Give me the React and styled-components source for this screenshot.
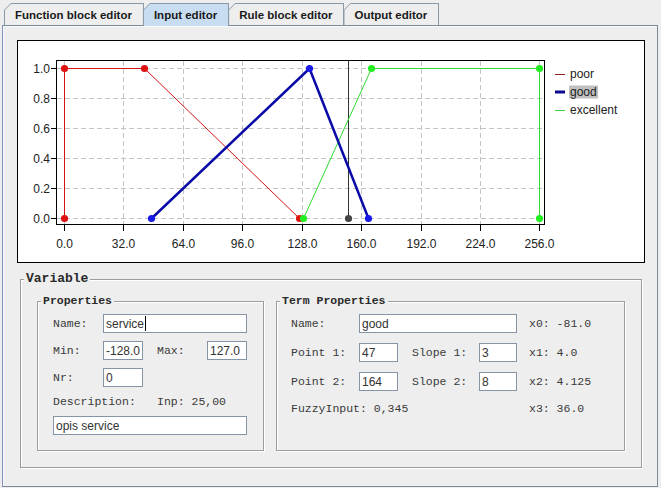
import React from 'react';
import styled, { createGlobalStyle } from 'styled-components';

const GlobalStyle = createGlobalStyle`
  html, body { margin: 0; padding: 0; background: #eeeeee; }
  body { font-family: "Liberation Sans", Arial, sans-serif; }
`;

const Window = styled.div`
  width: 661px;
  height: 488px;
  display: flex;
  flex-direction: column;
  background: #eeeeee;
  overflow: hidden;
`;

const TabStrip = styled.div`
  display: flex;
  height: 22px;
  margin-top: 3px;
  padding-left: 4px;
  position: relative;
  z-index: 1;
`;

const Tab = styled.div`
  box-sizing: border-box;
  height: ${p => (p.$active ? 23 : 22)}px;
  margin-left: ${p => (p.$first ? 0 : -1)}px;
  padding: 1px 1px 0 1px;
  background: #8b9aa8;
  clip-path: polygon(0 7px, 7px 0, 100% 0, 100% 100%, 0 100%);
`;

const TabFace = styled.div`
  height: 100%;
  display: flex;
  align-items: center;
  padding: 0 11px 0 10px;
  background: ${p => (p.$active ? '#c8ddf2' : '#eeeeee')};
  clip-path: polygon(0 6px, 6px 0, 100% 0, 100% 100%, 0 100%);
  font: bold 11.5px "Liberation Sans", Arial, sans-serif;
  color: #1a1a1a;
  white-space: nowrap;
`;

const Panel = styled.div`
  flex: 1;
  margin: 0 3px 1px 2px;
  border: 1px solid #7a8a99;
  border-left-color: #8190c0;
  box-shadow: inset 1px 1px 0 #f8f8ff;
  display: flex;
  flex-direction: column;
  padding: 14px 0 0 14px;
`;

const ChartBox = styled.div`
  box-sizing: border-box;
  width: 628px;
  height: 223px;
  border: 1px solid #000;
  background: #fff;
  svg { display: block; }
`;

const Group = styled.fieldset`
  margin: 0;
  padding: 0;
  min-inline-size: 0;
  border: 1px solid #9c9c9c;
  box-shadow: inset 1px 1px 0 #fff, 1px 1px 0 #fff;
  box-sizing: border-box;
`;

const Title = styled.legend`
  margin-left: 3px;
  padding: 0 2px;
  background: #eeeeee;
  font: bold ${p => (p.$big ? 13 : 11.5)}px "Liberation Mono", "Courier New", monospace;
  line-height: ${p => (p.$big ? 16 : 14)}px;
  color: #2a2a2a;
`;

const VariableGroup = styled(Group)`
  width: 622px;
  margin: 8px 0 0 3px;
`;

const VariableBody = styled.div`
  display: flex;
  gap: 12px;
  padding: 7px 16px 16px 16px;
`;

const PropsGroup = styled(Group)`
  width: 227px;
  height: 157px;
`;

const TermGroup = styled(Group)`
  flex: 1;
  height: 157px;
`;

const PropsGrid = styled.div`
  display: grid;
  grid-template-columns: 50px 40px 64px 40px;
  grid-template-rows: 19px 19px 19px 13px 19px;
  row-gap: 8px;
  padding: 6px 15px 0 15px;
`;

const TermGrid = styled.div`
  display: grid;
  grid-template-columns: 68px 39px 81px 38px auto;
  grid-template-rows: 19px 19px 19px 15px;
  row-gap: 10px;
  padding: 6px 0 0 14px;
`;

const Label = styled.div`
  display: flex;
  align-items: center;
  padding-left: ${p => p.$indent || 0}px;
  grid-column: ${p => p.$col || 'auto'};
  font: 11.5px "Liberation Mono", "Courier New", monospace;
  color: #3a3a3a;
  white-space: nowrap;
`;

const Field = styled.div`
  box-sizing: border-box;
  grid-column: ${p => p.$col || 'auto'};
  height: 19px;
  display: flex;
  align-items: center;
  padding: 0 2px;
  background: #fff;
  border: 1px solid #8595a5;
  font: 12px "Liberation Sans", Arial, sans-serif;
  color: #333;
  white-space: nowrap;
  overflow: hidden;
`;

const Caret = styled.span`
  display: inline-block;
  width: 1px;
  height: 15px;
  margin-left: 1px;
  background: #000;
`;

// value -> pixel, snapped to the pixel centre so 1px strokes stay crisp
const X = v => Math.round(64 + v * 1.857) + 0.5;
const Y = v => Math.round(217.7 - v * 149.7) + 0.5;

const xTicks = [0, 32, 64, 96, 128, 160, 192, 224, 256];
const yTicks = [0, 0.2, 0.4, 0.6, 0.8, 1.0];

const series = [
  { name: 'poor', line: '#d41414', dot: '#dd1111', width: 1, pts: [[0, 0], [0, 1], [43.1, 1], [126.7, 0]] },
  { name: 'excellent', line: '#2edc2e', dot: '#22ee22', width: 1, pts: [[128.8, 0], [165.2, 1], [256, 1], [256, 0]] },
  { name: 'good', line: '#0a0aa8', dot: '#1a1ae6', width: 2.5, pts: [[47, 0], [131.8, 1], [163.7, 0]] },
];

const legend = [
  { name: 'poor', color: '#8a2020', width: 1, y: 74.5 },
  { name: 'good', color: '#0a0a90', width: 3, y: 92 },
  { name: 'excellent', color: '#3ccc3c', width: 1, y: 110.5 },
];

function Chart() {
  const input = X(153);
  return (
    <ChartBox>
      <svg width="626" height="221">
        <g transform="translate(-18,-41)" fontFamily='"Liberation Sans", Arial, sans-serif' fontSize="12">
          <g shapeRendering="crispEdges">
            {yTicks.map(t => (
              <line key={'gy' + t} x1="57" x2="545" y1={Y(t)} y2={Y(t)} stroke="#c4c4c4" strokeDasharray="5 3" />
            ))}
            {xTicks.map(t => (
              <line key={'gx' + t} x1={X(t)} x2={X(t)} y1="61" y2="225" stroke="#c4c4c4" strokeDasharray="5 3" />
            ))}
            <rect x="56.5" y="60.5" width="488" height="164" fill="none" stroke="#000" />
            {yTicks.map(t => (
              <line key={'ty' + t} x1="51" x2="57" y1={Y(t)} y2={Y(t)} stroke="#000" />
            ))}
            {xTicks.map(t => (
              <line key={'tx' + t} x1={X(t)} x2={X(t)} y1="225" y2="231" stroke="#000" />
            ))}
            <line x1={input} x2={input} y1="61" y2={Y(0)} stroke="#333" />
          </g>
          {yTicks.map(t => (
            <text key={'ly' + t} x="50" y={Y(t) + 4} textAnchor="end" fill="#222">{t.toFixed(1)}</text>
          ))}
          {xTicks.map(t => (
            <text key={'lx' + t} x={X(t)} y="248" textAnchor="middle" fill="#222">{t.toFixed(1)}</text>
          ))}
          {series.map(s => (
            <g key={s.name}>
              <polyline
                points={s.pts.map(([a, b]) => `${X(a)},${Y(b)}`).join(' ')}
                fill="none"
                stroke={s.line}
                strokeWidth={s.width}
              />
              {s.pts.map(([a, b], i) => (
                <circle key={i} cx={X(a)} cy={Y(b)} r="3.6" fill={s.dot} />
              ))}
            </g>
          ))}
          <circle cx={input} cy={Y(0)} r="3.6" fill="#444" />
          {legend.map(l => (
            <g key={l.name}>
              {l.name === 'good' && <rect x="569" y="85.5" width="29" height="13" fill="#c0c0c0" />}
              <line x1="555" x2="565" y1={l.y} y2={l.y} stroke={l.color} strokeWidth={l.width} />
              <text x="570" y={Math.floor(l.y) + 4} fill="#222">{l.name}</text>
            </g>
          ))}
        </g>
      </svg>
    </ChartBox>
  );
}

const tabs = ['Function block editor', 'Input editor', 'Rule block editor', 'Output editor'];

export default function App() {
  return (
    <Window>
      <GlobalStyle />
      <TabStrip>
        {tabs.map((t, i) => (
          <Tab key={t} $first={i === 0} $active={i === 1}>
            <TabFace $active={i === 1}>{t}</TabFace>
          </Tab>
        ))}
      </TabStrip>
      <Panel>
        <Chart />
        <VariableGroup>
          <Title $big>Variable</Title>
          <VariableBody>
            <PropsGroup>
              <Title>Properties</Title>
              <PropsGrid>
                <Label>Name:</Label>
                <Field $col="2 / 5">service<Caret /></Field>
                <Label>Min:</Label>
                <Field>-128.0</Field>
                <Label $indent={14}>Max:</Label>
                <Field>127.0</Field>
                <Label>Nr:</Label>
                <Field>0</Field>
                <Label $col="3 / 5" />
                <Label $col="1 / 3">Description:</Label>
                <Label $col="3 / 5" $indent={14}>Inp: 25,00</Label>
                <Field $col="1 / 5">opis service</Field>
              </PropsGrid>
            </PropsGroup>
            <TermGroup>
              <Title>Term Properties</Title>
              <TermGrid>
                <Label>Name:</Label>
                <Field $col="2 / 5">good</Field>
                <Label $indent={12}>x0: -81.0</Label>
                <Label>Point 1:</Label>
                <Field>47</Field>
                <Label $indent={14}>Slope 1:</Label>
                <Field>3</Field>
                <Label $indent={12}>x1: 4.0</Label>
                <Label>Point 2:</Label>
                <Field>164</Field>
                <Label $indent={14}>Slope 2:</Label>
                <Field>8</Field>
                <Label $indent={12}>x2: 4.125</Label>
                <Label $col="1 / 5">FuzzyInput: 0,345</Label>
                <Label $indent={12}>x3: 36.0</Label>
              </TermGrid>
            </TermGroup>
          </VariableBody>
        </VariableGroup>
      </Panel>
    </Window>
  );
}
